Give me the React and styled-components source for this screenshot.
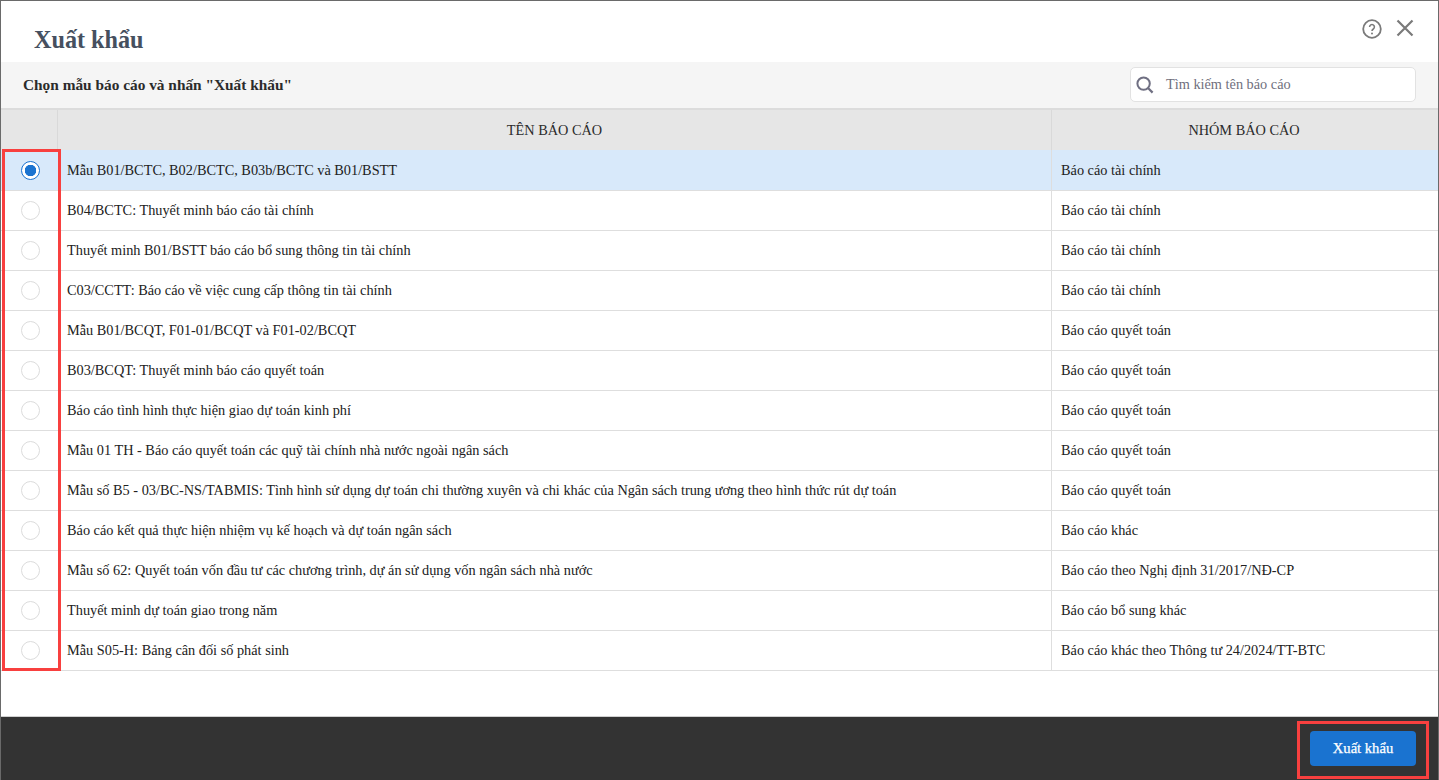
import React from "react";
import styled, { createGlobalStyle } from "styled-components";

const GlobalStyle = createGlobalStyle`
  html, body {
    margin: 0;
    padding: 0;
    background: #fff;
  }
  * {
    box-sizing: border-box;
  }
`;

const Dialog = styled.div`
  position: relative;
  width: 1439px;
  height: 780px;
  display: flex;
  flex-direction: column;
  border: 1px solid #6a6a6a;
  border-bottom: none;
  background: #fff;
  font-family: "Liberation Serif", serif;
  font-size: 14.3px;
  color: #212121;
  overflow: hidden;
`;

const TitleBar = styled.div`
  height: 61px;
  display: flex;
  justify-content: space-between;
  padding: 0 23px 0 33px;
`;

const Title = styled.h1`
  margin: 25px 0 0;
  font-size: 24.2px;
  line-height: 28px;
  font-weight: bold;
  color: #46505f;
`;

const TitleIcons = styled.div`
  display: flex;
  gap: 13px;
  padding-top: 18px;
  height: 40px;
`;

const Toolbar = styled.div`
  height: 46px;
  display: flex;
  align-items: center;
  justify-content: space-between;
  padding: 0 22px;
  background: #f5f5f5;
`;

const Hint = styled.div`
  font-size: 15.35px;
  font-weight: bold;
  color: #2b2b2b;
  margin-top: -1px;
`;

const Search = styled.div`
  width: 286px;
  height: 35px;
  display: flex;
  align-items: center;
  gap: 12px;
  padding-left: 5px;
  margin-bottom: 1px;
  background: #fff;
  border: 1px solid #e2e2e2;
  border-radius: 5px;
  font-size: 14.3px;
  color: #6f6f7d;
`;

const Table = styled.div`
  flex: 1;
  display: flex;
  flex-direction: column;
  border-top: 2px solid #dcdcdc;
`;

const HeadRow = styled.div`
  height: 40px;
  flex: none;
  display: grid;
  grid-template-columns: 56px 994px 1fr;
  background: #e6e6e6;
`;

const HeadCell = styled.div`
  display: flex;
  align-items: center;
  justify-content: center;
  padding-right: ${(p) => (p.$last ? "2px" : "0")};
  border-left: ${(p) => (p.$first ? "none" : "1px solid #d9d9d9")};
  font-size: 14.3px;
  color: #2b2b2b;
`;

const Row = styled.div`
  height: ${(p) => (p.$selected ? "41px" : "40px")};
  flex: none;
  display: grid;
  grid-template-columns: 56px 994px 1fr;
  background: ${(p) => (p.$selected ? "#d8e9fa" : "#fff")};
  border-bottom: 1px solid #dedede;
`;

const RadioCell = styled.div`
  display: flex;
  align-items: center;
  justify-content: center;
  padding-left: 3px;
`;

const Radio = styled.div`
  width: 19px;
  height: 19px;
  border-radius: 50%;
  border: ${(p) => (p.$checked ? "1px solid #1a73d0" : "1px solid #dcdcdc")};
  background: ${(p) =>
    p.$checked ? "radial-gradient(circle, #1a73d0 0 5.5px, #fff 6px)" : "#fff"};
`;

const NameCell = styled.div`
  display: flex;
  align-items: center;
  padding-left: 10px;
  white-space: nowrap;
`;

const GroupCell = styled.div`
  display: flex;
  align-items: center;
  padding-left: 9px;
  border-left: 1px solid #dedede;
  white-space: nowrap;
`;

const Footer = styled.div`
  height: 64px;
  flex: none;
  display: flex;
  justify-content: flex-end;
  padding: 14px 22px 0 0;
  background: #333;
  border-top: 1px solid #d0d0d0;
`;

const ExportButton = styled.button`
  width: 106px;
  height: 35px;
  border: none;
  border-radius: 4px;
  background: #1a73d0;
  color: #fff;
  font-family: "Liberation Serif", serif;
  font-size: 14.6px;
  font-weight: normal;
  -webkit-text-stroke: 0.25px #fff;
`;

const Highlight = styled.div`
  position: absolute;
  border: 3px solid #f8403f;
  pointer-events: none;
  left: ${(p) => p.$x}px;
  top: ${(p) => p.$y}px;
  width: ${(p) => p.$w}px;
  height: ${(p) => p.$h}px;
`;

const rows = [
  ["Mẫu B01/BCTC, B02/BCTC, B03b/BCTC và B01/BSTT", "Báo cáo tài chính"],
  ["B04/BCTC: Thuyết minh báo cáo tài chính", "Báo cáo tài chính"],
  ["Thuyết minh B01/BSTT báo cáo bổ sung thông tin tài chính", "Báo cáo tài chính"],
  ["C03/CCTT: Báo cáo về việc cung cấp thông tin tài chính", "Báo cáo tài chính"],
  ["Mẫu B01/BCQT, F01-01/BCQT và F01-02/BCQT", "Báo cáo quyết toán"],
  ["B03/BCQT: Thuyết minh báo cáo quyết toán", "Báo cáo quyết toán"],
  ["Báo cáo tình hình thực hiện giao dự toán kinh phí", "Báo cáo quyết toán"],
  ["Mẫu 01 TH - Báo cáo quyết toán các quỹ tài chính nhà nước ngoài ngân sách", "Báo cáo quyết toán"],
  ["Mẫu số B5 - 03/BC-NS/TABMIS: Tình hình sử dụng dự toán chi thường xuyên và chi khác của Ngân sách trung ương theo hình thức rút dự toán", "Báo cáo quyết toán"],
  ["Báo cáo kết quả thực hiện nhiệm vụ kế hoạch và dự toán ngân sách", "Báo cáo khác"],
  ["Mẫu số 62: Quyết toán vốn đầu tư các chương trình, dự án sử dụng vốn ngân sách nhà nước", "Báo cáo theo Nghị định 31/2017/NĐ-CP"],
  ["Thuyết minh dự toán giao trong năm", "Báo cáo bổ sung khác"],
  ["Mẫu S05-H: Bảng cân đối số phát sinh", "Báo cáo khác theo Thông tư 24/2024/TT-BTC"],
];

const HelpIcon = () => (
  <svg width="20" height="20" viewBox="0 0 20 20" fill="none">
    <circle cx="10" cy="10" r="8.8" stroke="#7a7a7a" strokeWidth="1.8" />
    <path d="M7.6 8a2.4 2.4 0 1 1 3.7 2c-.9.6-1.3 1-1.3 2" stroke="#7a7a7a" strokeWidth="1.6" />
    <circle cx="10" cy="14.4" r="1" fill="#7a7a7a" />
  </svg>
);

const CloseIcon = () => (
  <svg width="20" height="20" viewBox="0 0 20 20" fill="none">
    <path d="M2.5 1.5 17.5 16.5M17.5 1.5 2.5 16.5" stroke="#7a7a7a" strokeWidth="2.2" />
  </svg>
);

const SearchIcon = () => (
  <svg width="18" height="18" viewBox="0 0 18 18" fill="none">
    <circle cx="7.6" cy="7.6" r="6.2" stroke="#6f6f82" strokeWidth="2" />
    <path d="M12 12 16.6 16.6" stroke="#6f6f82" strokeWidth="2.2" />
  </svg>
);

const App = () => {
  return (
    <>
      <GlobalStyle />
      <Dialog>
        <TitleBar>
          <Title>Xuất khẩu</Title>
          <TitleIcons>
            <HelpIcon />
            <CloseIcon />
          </TitleIcons>
        </TitleBar>
        <Toolbar>
          <Hint>Chọn mẫu báo cáo và nhấn "Xuất khẩu"</Hint>
          <Search>
            <SearchIcon />
            Tìm kiếm tên báo cáo
          </Search>
        </Toolbar>
        <Table>
          <HeadRow>
            <HeadCell $first />
            <HeadCell>TÊN BÁO CÁO</HeadCell>
            <HeadCell $last>NHÓM BÁO CÁO</HeadCell>
          </HeadRow>
          {rows.map(([name, group], i) => (
            <Row key={name} $selected={i === 0}>
              <RadioCell>
                <Radio $checked={i === 0} />
              </RadioCell>
              <NameCell>{name}</NameCell>
              <GroupCell>{group}</GroupCell>
            </Row>
          ))}
        </Table>
        <Footer>
          <ExportButton>Xuất khẩu</ExportButton>
        </Footer>
        <Highlight $x={1} $y={148} $w={59} $h={522} />
        <Highlight $x={1296} $y={720} $w={132} $h={58} />
      </Dialog>
    </>
  );
};

export default App;
